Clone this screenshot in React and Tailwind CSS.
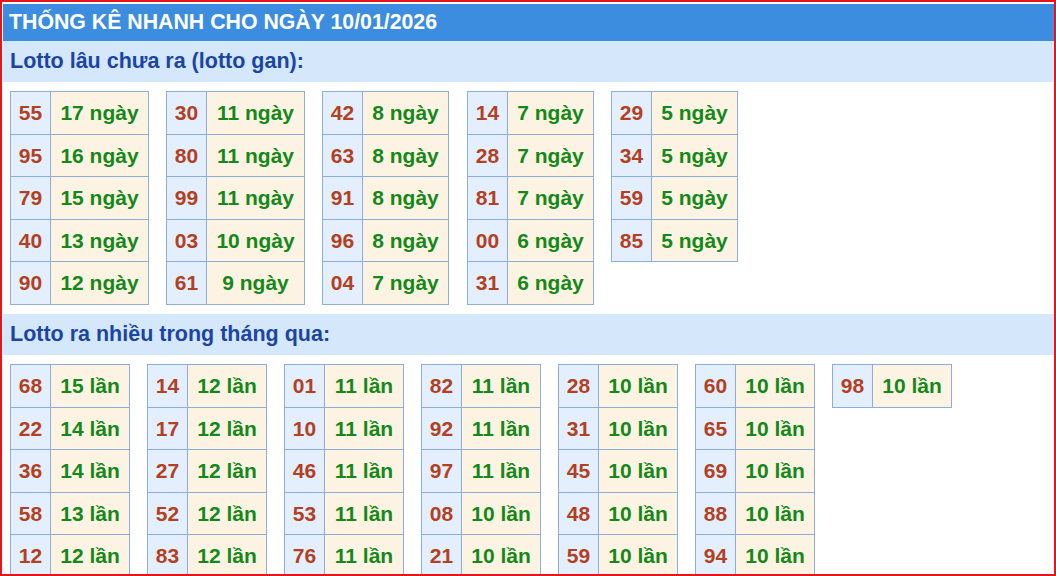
import React from 'react';

const ganCols = [
  [['55', 17], ['95', 16], ['79', 15], ['40', 13], ['90', 12]],
  [['30', 11], ['80', 11], ['99', 11], ['03', 10], ['61', 9]],
  [['42', 8], ['63', 8], ['91', 8], ['96', 8], ['04', 7]],
  [['14', 7], ['28', 7], ['81', 7], ['00', 6], ['31', 6]],
  [['29', 5], ['34', 5], ['59', 5], ['85', 5]],
];

const nhieuCols = [
  [['68', 15], ['22', 14], ['36', 14], ['58', 13], ['12', 12]],
  [['14', 12], ['17', 12], ['27', 12], ['52', 12], ['83', 12]],
  [['01', 11], ['10', 11], ['46', 11], ['53', 11], ['76', 11]],
  [['82', 11], ['92', 11], ['97', 11], ['08', 10], ['21', 10]],
  [['28', 10], ['31', 10], ['45', 10], ['48', 10], ['59', 10]],
  [['60', 10], ['65', 10], ['69', 10], ['88', 10], ['94', 10]],
  [['98', 10]],
];

/* one small two-column table */
function StatBlock({ rows, unit, valueWidth }) {
  return (
    <div className="border-t border-l border-[#8cadde] self-start">
      {rows.map(([num, count]) => (
        <div key={num} className="flex h-[42.6px]">
          <div className="w-[40px] flex items-center justify-center bg-[#e3effd] border-r border-b border-[#8cadde] text-[#b3401f]">
            {num}
          </div>
          <div
            className={`${valueWidth} flex items-center justify-center bg-[#fdf3e3] border-r border-b border-[#8cadde] text-[#14891a]`}
          >
            {count} {unit}
          </div>
        </div>
      ))}
    </div>
  );
}

function SectionTitle({ children }) {
  return (
    <div className="h-[41px] flex items-center pl-[7px] bg-[#d5e7fb] text-[#1a45a5] text-[21.5px] font-bold">
      {children}
    </div>
  );
}

export default function App() {
  return (
    <div
      className="w-[1056px] h-[576px] overflow-hidden border-2 border-[#e8141b] bg-white"
      style={{ fontFamily: '"Liberation Sans", Arial, sans-serif' }}
    >
      <div className="pt-[2px] pl-[1px]">
        <div className="h-[37px] flex items-center pl-[6px] bg-[#3c8ddf] text-white text-[21.3px] font-bold">
          THỐNG KÊ NHANH CHO NGÀY 10/01/2026
        </div>

        <SectionTitle>Lotto lâu chưa ra (lotto gan):</SectionTitle>
        <div className="flex pl-[7px] pt-[9px] pb-[9px] text-[21px] font-bold">
          <div className="flex gap-[17px]">
            <StatBlock rows={ganCols[0]} unit="ngày" valueWidth="w-[98px]" />
            <StatBlock rows={ganCols[1]} unit="ngày" valueWidth="w-[98px]" />
            <StatBlock rows={ganCols[2]} unit="ngày" valueWidth="w-[86px]" />
          </div>
          <div className="flex gap-[17px] ml-[18px]">
            <StatBlock rows={ganCols[3]} unit="ngày" valueWidth="w-[86px]" />
            <StatBlock rows={ganCols[4]} unit="ngày" valueWidth="w-[86px]" />
          </div>
        </div>

        <SectionTitle>Lotto ra nhiều trong tháng qua:</SectionTitle>
        <div className="flex gap-[17px] pl-[7px] pt-[9px] text-[21px] font-bold">
          {nhieuCols.map((col, i) => (
            <StatBlock key={i} rows={col} unit="lần" valueWidth="w-[79px]" />
          ))}
        </div>
      </div>
    </div>
  );
}
